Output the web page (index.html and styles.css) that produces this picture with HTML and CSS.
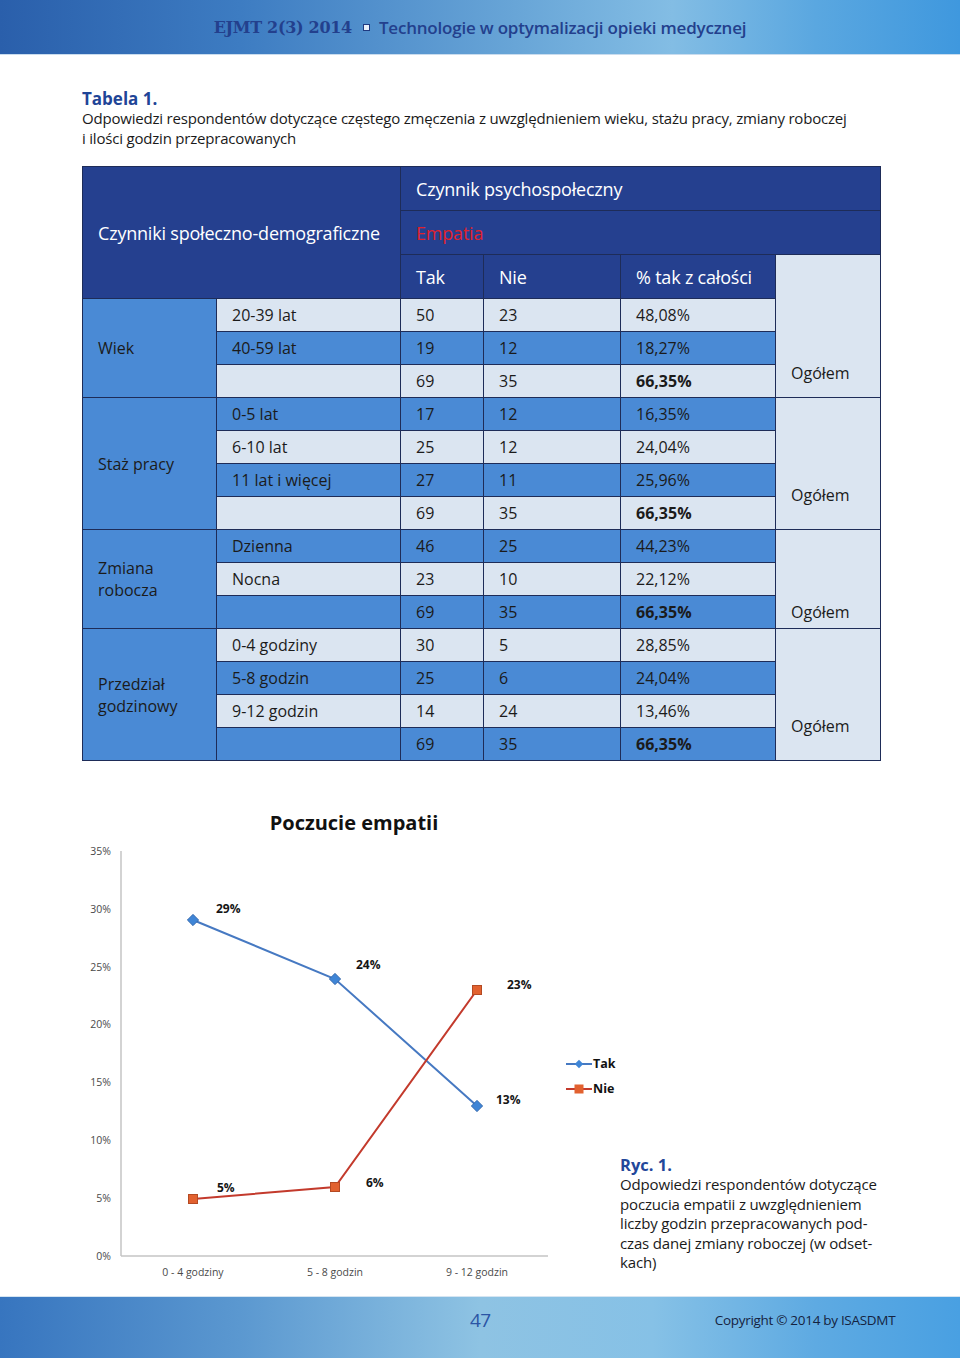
FILE: index.html
```html
<!DOCTYPE html>
<html lang="pl">
<head>
<meta charset="utf-8">
<title>EJMT 2(3) 2014</title>
<link rel="stylesheet" href="styles.css">
</head>
<body>
<div class="page">
  <header class="topbar">
    <div class="topbar-title"><span class="journal">EJMT 2(3) 2014</span><span class="sq"></span><span class="topic">Technologie w optymalizacji opieki medycznej</span></div>
  </header>

  <main class="content">
    <div class="caption-block">
      <div class="cap-head">Tabela 1.</div>
      <p class="cap-text">Odpowiedzi respondentów dotyczące częstego zmęczenia z uwzględnieniem wieku, stażu pracy, zmiany roboczej i ilości godzin przepracowanych</p>
    </div>

    <table class="data">
      <colgroup>
        <col class="c1"><col class="c2"><col class="c3"><col class="c4"><col class="c5"><col class="c6">
      </colgroup>
      <tr class="h">
        <th colspan="2" rowspan="3" class="hd">Czynniki społeczno-demograficzne</th>
        <th colspan="4" class="hd">Czynnik psychospołeczny</th>
      </tr>
      <tr class="h">
        <th colspan="4" class="hd red">Empatia</th>
      </tr>
      <tr class="h">
        <th class="hd">Tak</th><th class="hd">Nie</th><th class="hd">% tak z całości</th>
        <td rowspan="4" class="tot tot-a">Ogółem</td>
      </tr>

      <tr class="l">
        <td rowspan="3" class="grp">Wiek</td>
        <td>20-39 lat</td><td>50</td><td>23</td><td>48,08%</td>
      </tr>
      <tr class="b"><td>40-59 lat</td><td>19</td><td>12</td><td>18,27%</td></tr>
      <tr class="l"><td></td><td>69</td><td>35</td><td class="strong">66,35%</td></tr>

      <tr class="b">
        <td rowspan="4" class="grp">Staż pracy</td>
        <td>0-5 lat</td><td>17</td><td>12</td><td>16,35%</td>
        <td rowspan="4" class="tot tot-b">Ogółem</td>
      </tr>
      <tr class="l"><td>6-10 lat</td><td>25</td><td>12</td><td>24,04%</td></tr>
      <tr class="b"><td>11 lat i więcej</td><td>27</td><td>11</td><td>25,96%</td></tr>
      <tr class="l"><td></td><td>69</td><td>35</td><td class="strong">66,35%</td></tr>

      <tr class="b">
        <td rowspan="3" class="grp">Zmiana<br>robocza</td>
        <td>Dzienna</td><td>46</td><td>25</td><td>44,23%</td>
        <td rowspan="3" class="tot tot-c">Ogółem</td>
      </tr>
      <tr class="l"><td>Nocna</td><td>23</td><td>10</td><td>22,12%</td></tr>
      <tr class="b"><td></td><td>69</td><td>35</td><td class="strong">66,35%</td></tr>

      <tr class="l">
        <td rowspan="4" class="grp">Przedział<br>godzinowy</td>
        <td>0-4 godziny</td><td>30</td><td>5</td><td>28,85%</td>
        <td rowspan="4" class="tot tot-b">Ogółem</td>
      </tr>
      <tr class="b"><td>5-8 godzin</td><td>25</td><td>6</td><td>24,04%</td></tr>
      <tr class="l"><td>9-12 godzin</td><td>14</td><td>24</td><td>13,46%</td></tr>
      <tr class="b"><td></td><td>69</td><td>35</td><td class="strong">66,35%</td></tr>
    </table>

    <section class="figure">
      <svg class="chart" width="478" height="495" viewBox="0 0 478 495">
        <text class="ch-title" x="272" y="35" text-anchor="middle">Poczucie empatii</text>
        <g class="ylab" text-anchor="end">
          <text x="29" y="60">35%</text>
          <text x="29" y="118">30%</text>
          <text x="29" y="176">25%</text>
          <text x="29" y="233">20%</text>
          <text x="29" y="291">15%</text>
          <text x="29" y="349">10%</text>
          <text x="29" y="407">5%</text>
          <text x="29" y="465">0%</text>
        </g>
        <line class="axis" x1="39" y1="56" x2="39" y2="461"/>
        <line class="axis" x1="39" y1="461" x2="466" y2="461"/>
        <g class="xlab" text-anchor="middle">
          <text x="111" y="481">0 - 4 godziny</text>
          <text x="253" y="481">5 - 8 godzin</text>
          <text x="395" y="481">9 - 12 godzin</text>
        </g>
        <polyline class="ln-tak" points="111,125 253,184 395,311"/>
        <polyline class="ln-nie" points="111,404 253,392 395,195"/>
        <g class="mk-tak">
          <rect x="107" y="121" width="8" height="8" transform="rotate(45 111 125)"/>
          <rect x="249" y="180" width="8" height="8" transform="rotate(45 253 184)"/>
          <rect x="391" y="307" width="8" height="8" transform="rotate(45 395 311)"/>
        </g>
        <g class="mk-nie">
          <rect x="106.5" y="399.5" width="9" height="9"/>
          <rect x="248.5" y="387.5" width="9" height="9"/>
          <rect x="390.5" y="190.5" width="9" height="9"/>
        </g>
        <g class="dlab">
          <text x="134" y="118">29%</text>
          <text x="274" y="174">24%</text>
          <text x="425" y="194">23%</text>
          <text x="414" y="309">13%</text>
          <text x="135" y="397">5%</text>
          <text x="284" y="392">6%</text>
        </g>
      </svg>

      <div class="side">
        <ul class="legend">
          <li class="lg"><svg width="26" height="10" viewBox="0 0 26 10"><line x1="0" y1="5" x2="26" y2="5" stroke="#4679c2" stroke-width="2"/><rect x="10" y="2" width="6" height="6" fill="#3f85d6" transform="rotate(45 13 5)"/></svg><span>Tak</span></li>
          <li class="lg"><svg width="26" height="10" viewBox="0 0 26 10"><line x1="0" y1="5" x2="26" y2="5" stroke="#c33a2c" stroke-width="2"/><rect x="8.5" y="0.5" width="9" height="9" fill="#e2612f"/></svg><span>Nie</span></li>
        </ul>
        <div class="fig-cap">
          <div class="fig-head">Ryc. 1.</div>
          <p class="fig-text">Odpowiedzi respondentów dotyczące<br>poczucia empatii z uwzględnieniem<br>liczby godzin przepracowanych pod-<br>czas danej zmiany roboczej (w odset-<br>kach)</p>
        </div>
      </div>
    </section>
  </main>

  <footer class="bottombar">
    <span class="pageno">47</span>
    <span class="copy">Copyright © 2014 by ISASDMT</span>
  </footer>
</div>
</body>
</html>
```

FILE: styles.css
```css
* { box-sizing: border-box; }
html, body { margin: 0; padding: 0; }
body {
  background: #ffffff;
  font-family: "Open Sans", "Noto Sans", sans-serif;
  color: #1b1b1b;
}
.page {
  width: 960px;
  height: 1358px;
  display: flex;
  flex-direction: column;
  overflow: hidden;
}

/* top bar */
.topbar {
  height: 55px;
  flex: none;
  background: linear-gradient(90deg, #2a5fab 0%, #3d7cc2 25%, #6aa7d8 55%, #83bde4 70%, #5aa7e0 85%, #3f98de 100%);
  border-bottom: 1px solid #c9dcee;
  display: flex;
  align-items: center;
  justify-content: center;
}
.topbar-title {
  display: flex;
  align-items: center;
  color: #23408d;
  font-weight: 700;
}
.journal {
  font-family: "DejaVu Serif", "Liberation Serif", serif;
  font-size: 16px;
  letter-spacing: -0.3px;
}
.sq {
  width: 7px;
  height: 7px;
  border: 1px solid #1f3a80;
  background: #e8f0fa;
  margin: 0 9px 0 11px;
  display: inline-block;
}
.topic {
  font-size: 17px;
  font-weight: 600;
  letter-spacing: -0.2px;
}

/* content */
.content {
  flex: 1;
  padding: 34px 80px 0 82px;
}
.caption-block { margin-bottom: 18px; }
.cap-head {
  color: #1f4597;
  font-weight: 700;
  font-size: 17px;
  line-height: 20px;
}
.cap-text {
  margin: 0;
  max-width: 766px;
  font-size: 15px;
  line-height: 19.5px;
  letter-spacing: -0.2px;
  color: #1a1a1a;
}

/* table */
.data {
  border-collapse: collapse;
  table-layout: fixed;
  width: 798px;
  border: 1.5px solid #3a3f4a;
  font-size: 16px;
}
.c1 { width: 134px; }
.c2 { width: 184px; }
.c3 { width: 83px; }
.c4 { width: 137px; }
.c5 { width: 155px; }
.c6 { width: 105px; }
.data th, .data td {
  border: 1px solid #1e2c58;
  padding: 0 0 0 15px;
  text-align: left;
  vertical-align: middle;
  font-weight: 400;
  line-height: 22px;
}
.data tr.h { height: 44px; }
.data tr.l, .data tr.b { height: 33px; }
.data .hd {
  background: #25408f;
  color: #ffffff;
  font-size: 18px;
  letter-spacing: -0.2px;
}
.data .hd.red { color: #e0212d; }
.data tr.l td { background: #dbe5f1; }
.data tr.b td { background: #4a8ad5; }
.data tr td.grp { background: #4a8ad5; }
.data tr td.tot { background: #dbe5f1; vertical-align: bottom; }
.data .tot-a { padding-bottom: 13px; }
.data .tot-b { padding-bottom: 23px; }
.data .tot-c { padding-bottom: 5px; }
.data td.strong { font-weight: 700; }

/* figure */
.figure {
  display: flex;
  margin-top: 34px;
}
.chart { display: block; flex: none; }
.ch-title {
  font-family: "Open Sans", sans-serif;
  font-size: 20px;
  font-weight: 700;
  fill: #111;
}
.ylab text, .xlab text {
  font-family: "Open Sans", sans-serif;
  font-size: 10.5px;
  fill: #4a4a4a;
}
.axis { stroke: #c4c4c4; stroke-width: 1.5; }
.ln-tak { fill: none; stroke: #4679c2; stroke-width: 2; }
.ln-nie { fill: none; stroke: #c33a2c; stroke-width: 2; }
.mk-tak rect { fill: #3f85d6; stroke: #3466a8; stroke-width: 0.8; }
.mk-nie rect { fill: #e2612f; stroke: #b44a23; stroke-width: 1; }
.dlab text {
  font-family: "Open Sans", sans-serif;
  font-size: 12px;
  font-weight: 700;
  fill: #151515;
}

.side {
  flex: 1;
  padding-left: 6px;
  padding-top: 256px;
}
.legend {
  list-style: none;
  margin: 0;
  padding: 0;
}
.lg {
  display: flex;
  align-items: center;
  height: 25px;
  font-size: 12.5px;
  font-weight: 700;
  color: #111;
}
.lg svg { display: block; margin-right: 1px; }
.fig-cap {
  margin-top: 54px;
  margin-left: 54px;
}
.fig-head {
  color: #23479a;
  font-weight: 700;
  font-size: 16.5px;
  line-height: 20px;
}
.fig-text {
  margin: 0;
  font-size: 15px;
  line-height: 19.5px;
  letter-spacing: -0.15px;
  color: #1a1a1a;
}

/* bottom bar */
.bottombar {
  height: 62px;
  flex: none;
  background: linear-gradient(90deg, #3775bf 0%, #5b98d0 25%, #8ec3e3 50%, #86c1e6 68%, #5eaae2 85%, #49a0e2 100%);
  border-top: 1px solid #d5e5f2;
  display: flex;
  align-items: center;
  padding-bottom: 16px;
}
.pageno {
  margin-left: 470px;
  font-size: 19px;
  color: #2b55a5;
  letter-spacing: -0.5px;
}
.copy {
  margin-left: 224px;
  font-size: 13.5px;
  color: #15233f;
  letter-spacing: -0.3px;
}
```
